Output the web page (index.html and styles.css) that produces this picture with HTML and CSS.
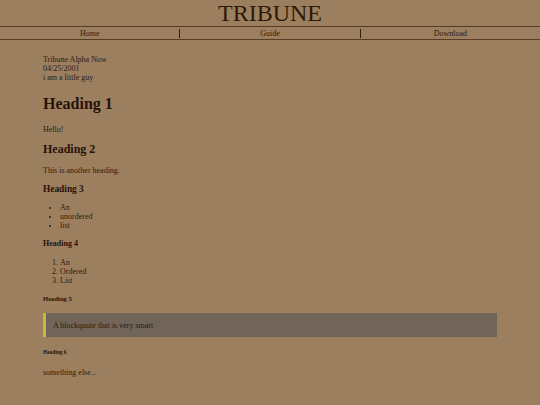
FILE: index.html
```html
<!DOCTYPE html>
<html>
<head>
<meta charset="utf-8">
<link rel="stylesheet" href="styles.css">
</head>
<body>
<header class="masthead">
  <h1 class="title">TRIBUNE</h1>
  <nav class="nav">
    <a class="nav-item">Home</a>
    <a class="nav-item">Guide</a>
    <a class="nav-item">Download</a>
  </nav>
</header>
<main class="content">
  <p class="intro">Tribune Alpha Now<br>04/25/2001<br>i am a little guy</p>
  <h1 class="h1">Heading 1</h1>
  <p class="p p-hello">Hello!</p>
  <h2 class="h2">Heading 2</h2>
  <p class="p p-another">This is another heading.</p>
  <h3 class="h3">Heading 3</h3>
  <ul class="list list-ul">
    <li>An</li>
    <li>unordered</li>
    <li>list</li>
  </ul>
  <h4 class="h4">Heading 4</h4>
  <ol class="list list-ol">
    <li>An</li>
    <li>Ordered</li>
    <li>List</li>
  </ol>
  <h5 class="h5">Heading 5</h5>
  <blockquote class="quote">A blockquote that is very smart</blockquote>
  <h6 class="h6">Heading 6</h6>
  <p class="p p-else">something else...</p>
</main>
</body>
</html>
```
FILE: styles.css
```css
html, body {
  margin: 0;
  padding: 0;
  background: #9b7f5f;
  color: #2f1b10;
  font-family: "Liberation Serif", "Times New Roman", serif;
  font-size: 8px;
}
.masthead {
  text-align: center;
}
.title {
  margin: 0;
  font-size: 24px;
  font-weight: normal;
  line-height: 26px;
  height: 26px;
  color: #2f1808;
}
.nav {
  display: flex;
  border-top: 1px solid #5a3b24;
  border-bottom: 1px solid #5a3b24;
  padding: 2px 0 1px;
}
.nav-item {
  flex: 1;
  line-height: 9px;
  font-size: 8px;
  color: #2f1b10;
}
.nav-item + .nav-item {
  border-left: 1px solid #3a1c0e;
}
.content {
  padding: 15px 43px 0;
}
.content > * {
  margin-bottom: 0;
}
.intro { margin: 0; }
.h1 { font-size: 16px; margin-top: 12.5px; }
.p-hello { margin-top: 12.5px; }
.h2 { font-size: 12px; margin-top: 8.2px; }
.p-another { margin-top: 8.5px; }
.h3 { font-size: 9.36px; margin-top: 9.5px; }
.list-ul { margin-top: 8.9px; }
.h4 { font-size: 8px; margin-top: 8.9px; }
.list-ol { margin-top: 10.5px; }
.h5 { font-size: 6.64px; margin-top: 9.2px; }
.quote { margin-top: 10.9px; }
.h6 { font-size: 5.36px; margin-top: 11.7px; }
.p-else { margin-top: 12.8px; }
.h1, .h2, .h3, .h4, .h5, .h6 {
  color: #2a1208;
}
.list {
  padding-left: 17px;
}
.quote {
  margin-left: 0;
  margin-right: 0;
  background: #716458;
  border-left: 3px solid #c4bb3c;
  padding: 8px 8px 7.5px 7px;
}
```
